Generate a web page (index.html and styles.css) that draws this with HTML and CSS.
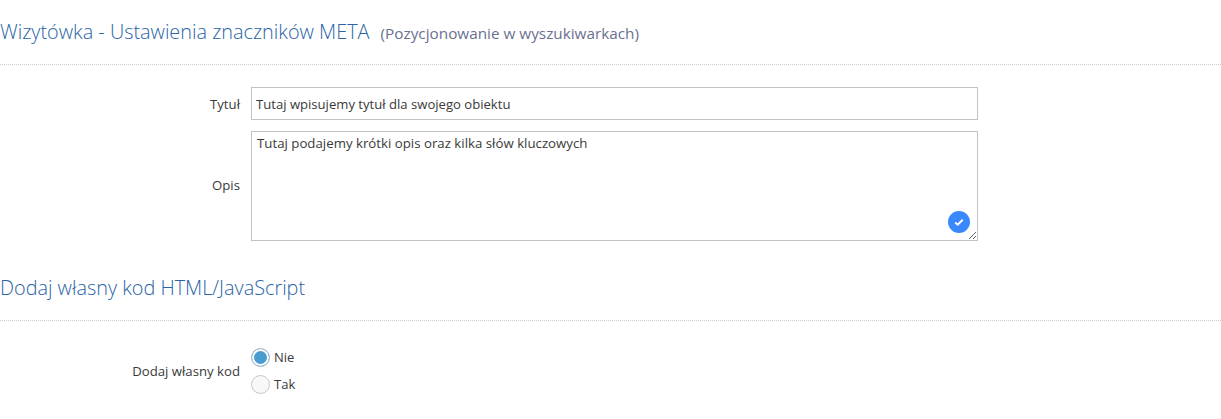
FILE: index.html
```html
<!DOCTYPE html>
<html lang="pl">
<head>
<meta charset="utf-8">
<title>Ustawienia META</title>
<link rel="stylesheet" href="styles.css">
</head>
<body>
<main class="page">
  <h3 class="section-title">Wizytówka - Ustawienia znaczników META <small class="section-note">(Pozycjonowanie w wyszukiwarkach)</small></h3>
  <div class="form-block">
    <div class="row">
      <label class="label" for="t">Tytuł</label>
      <input class="input" id="t" type="text" value="Tutaj wpisujemy tytuł dla swojego obiektu">
    </div>
    <div class="row row-area">
      <label class="label" for="o">Opis</label>
      <div class="area-wrap">
        <textarea class="area" id="o">Tutaj podajemy krótki opis oraz kilka słów kluczowych</textarea>
        <span class="check-badge"><svg viewBox="0 0 24 24" width="24" height="24"><circle cx="12" cy="12" r="11" fill="#3b88fd"/><path d="M8.2 12.4l2.5 2.3 5-5" fill="none" stroke="#fff" stroke-width="2"/></svg></span>
      </div>
    </div>
  </div>
  <h3 class="section-title second">Dodaj własny kod HTML/JavaScript</h3>
  <div class="radio-row">
    <span class="label">Dodaj własny kod</span>
    <div class="radios">
      <label class="radio"><span class="dot on"></span>Nie</label>
      <label class="radio"><span class="dot"></span>Tak</label>
    </div>
  </div>
</main>
</body>
</html>
```
FILE: styles.css
```css
* { box-sizing: border-box; }
html, body { margin: 0; padding: 0; background: #fff; }
body { font-family: "Open Sans", sans-serif; font-size: 13px; color: #333; height: 419px; overflow: hidden; }
.page { width: 1221px; }
.section-title {
  margin: 0;
  height: 65px;
  padding-top: 18px;
  font-size: 19.85px;
  line-height: 28px;
  font-weight: 300;
  color: #2a64a6;
  border-bottom: 1px dotted #ccc;
}
.section-note { font-size: 15.3px; font-weight: 400; color: #6a7090; margin-left: 6px; }
.second { margin-top: 23px; padding-top: 10px; height: 57px; }
.form-block { padding-top: 22px; }
.row { display: flex; align-items: center; height: 33px; }
.row-area { height: 110px; margin-top: 11px; align-items: center; }
.label { width: 240px; text-align: right; font-size: 13.2px; line-height: 18px; margin-right: 11px; color: #3a3a3a; }
.row-area .label { position: relative; top: -1px; }
.input {
  width: 727px; height: 33px; border: 1px solid #c2c2c2; padding: 0 4px;
  font: 13.1px "Open Sans", sans-serif; color: #3a3a3a; background: #fff; outline: 0;
}
.area-wrap { position: relative; width: 727px; height: 110px; display: flex; }
.area {
  width: 727px; height: 110px; border: 1px solid #c2c2c2; padding: 2px 5px;
  font: 13.25px/18px "Open Sans", sans-serif; color: #3a3a3a; background: #fff; outline: 0; resize: both;
}
.check-badge { position: absolute; right: 7px; bottom: 7px; width: 24px; height: 24px; }
.check-badge svg { display: block; }
.radio-row { display: flex; align-items: center; margin-top: 26px; }
.radios { display: flex; flex-direction: column; gap: 7px; }
.radio { display: flex; align-items: center; height: 20px; font-size: 13px; color: #3a3a3a; }
.dot {
  width: 19px; height: 19px; border-radius: 50%; border: 1px solid #c8c8c8; background: #f8f8f8;
  margin-right: 4px; display: block; flex: none;
}
.dot.on {
  border-color: #a9b8c8; background: #4a9bd0; box-shadow: inset 0 0 0 2px #fff;
}
```
